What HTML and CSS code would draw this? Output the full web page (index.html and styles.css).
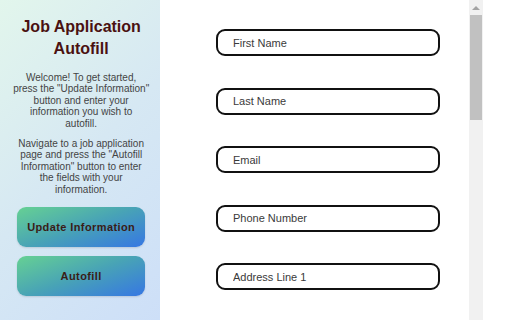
FILE: index.html
```html
<!DOCTYPE html>
<html lang="en">
<head>
<meta charset="utf-8">
<title>Job Application Autofill</title>
<link rel="stylesheet" href="styles.css">
</head>
<body>
<div class="app">
  <aside class="side">
    <h1 class="title">Job Application Autofill</h1>
    <p class="intro">Welcome! To get started, press the "Update Information" button and enter your information you wish to autofill.</p>
    <p class="intro">Navigate to a job application page and press the "Autofill Information" button to enter the fields with your information.</p>
    <div class="actions">
      <button class="action">Update Information</button>
      <button class="action">Autofill</button>
    </div>
  </aside>
  <main class="form">
    <input class="field" type="text" placeholder="First Name">
    <input class="field" type="text" placeholder="Last Name">
    <input class="field" type="text" placeholder="Email">
    <input class="field" type="text" placeholder="Phone Number">
    <input class="field" type="text" placeholder="Address Line 1">
  </main>
  <div class="scrollbar">
    <div class="arrow"><span class="tri"></span></div>
    <div class="thumb"></div>
    <div class="track"></div>
  </div>
</div>
</body>
</html>
```
FILE: styles.css
```css
html, body {
  margin: 0;
  padding: 0;
  background: #ffffff;
}
body {
  font-family: "Liberation Sans", Arial, sans-serif;
}
.app {
  display: flex;
  width: 483px;
  height: 320px;
  overflow: hidden;
}
.side {
  width: 160px;
  flex: none;
  box-sizing: border-box;
  padding: 16px 10.7px 0 13px;
  background: linear-gradient(135deg, #e2f6ec 0%, #d6e8f3 50%, #cddff8 100%);
  display: flex;
  flex-direction: column;
  text-align: center;
}
.title {
  margin: 0;
  font-size: 16px;
  line-height: 22px;
  font-weight: bold;
  color: #4a1111;
}
.intro {
  margin: 12px 0 0;
  font-size: 10px;
  line-height: 11.4px;
  color: #444444;
}
.intro + .intro {
  margin-top: 9px;
}
.actions {
  margin-top: 12px;
  display: flex;
  flex-direction: column;
  align-items: center;
  gap: 9px;
}
.action {
  width: 128px;
  height: 40px;
  border: none;
  border-radius: 9px;
  background: linear-gradient(160deg, #66d193 0%, #48a3b6 50%, #3677e3 100%);
  box-shadow: 0 1px 2px rgba(0, 0, 0, 0.12);
  font-family: "Liberation Sans", Arial, sans-serif;
  font-size: 11px;
  font-weight: bold;
  letter-spacing: 0.4px;
  color: #3a1c16;
  padding: 0;
}
.form {
  flex: 1;
  display: flex;
  flex-direction: column;
  gap: 31.5px;
  padding: 29px 0 0 56px;
}
.field {
  width: 224px;
  height: 27px;
  box-sizing: border-box;
  border: 2px solid #111111;
  border-radius: 9px;
  padding: 0 0 0 15px;
  font-family: "Liberation Sans", Arial, sans-serif;
  font-size: 11px;
  color: #333333;
  background: #ffffff;
  outline: none;
}
.field::placeholder {
  color: #3a3a3a;
  opacity: 1;
}
.scrollbar {
  width: 14px;
  flex: none;
  background: #f1f1f1;
  display: flex;
  flex-direction: column;
}
.arrow {
  height: 15px;
  display: flex;
  align-items: center;
  justify-content: center;
}
.tri {
  width: 0;
  height: 0;
  border-left: 4px solid transparent;
  border-right: 4px solid transparent;
  border-bottom: 4px solid #a3a3a3;
}
.thumb {
  height: 105px;
  margin: 0 1px;
  background: #c1c1c1;
}
.track {
  flex: 1;
}
```
